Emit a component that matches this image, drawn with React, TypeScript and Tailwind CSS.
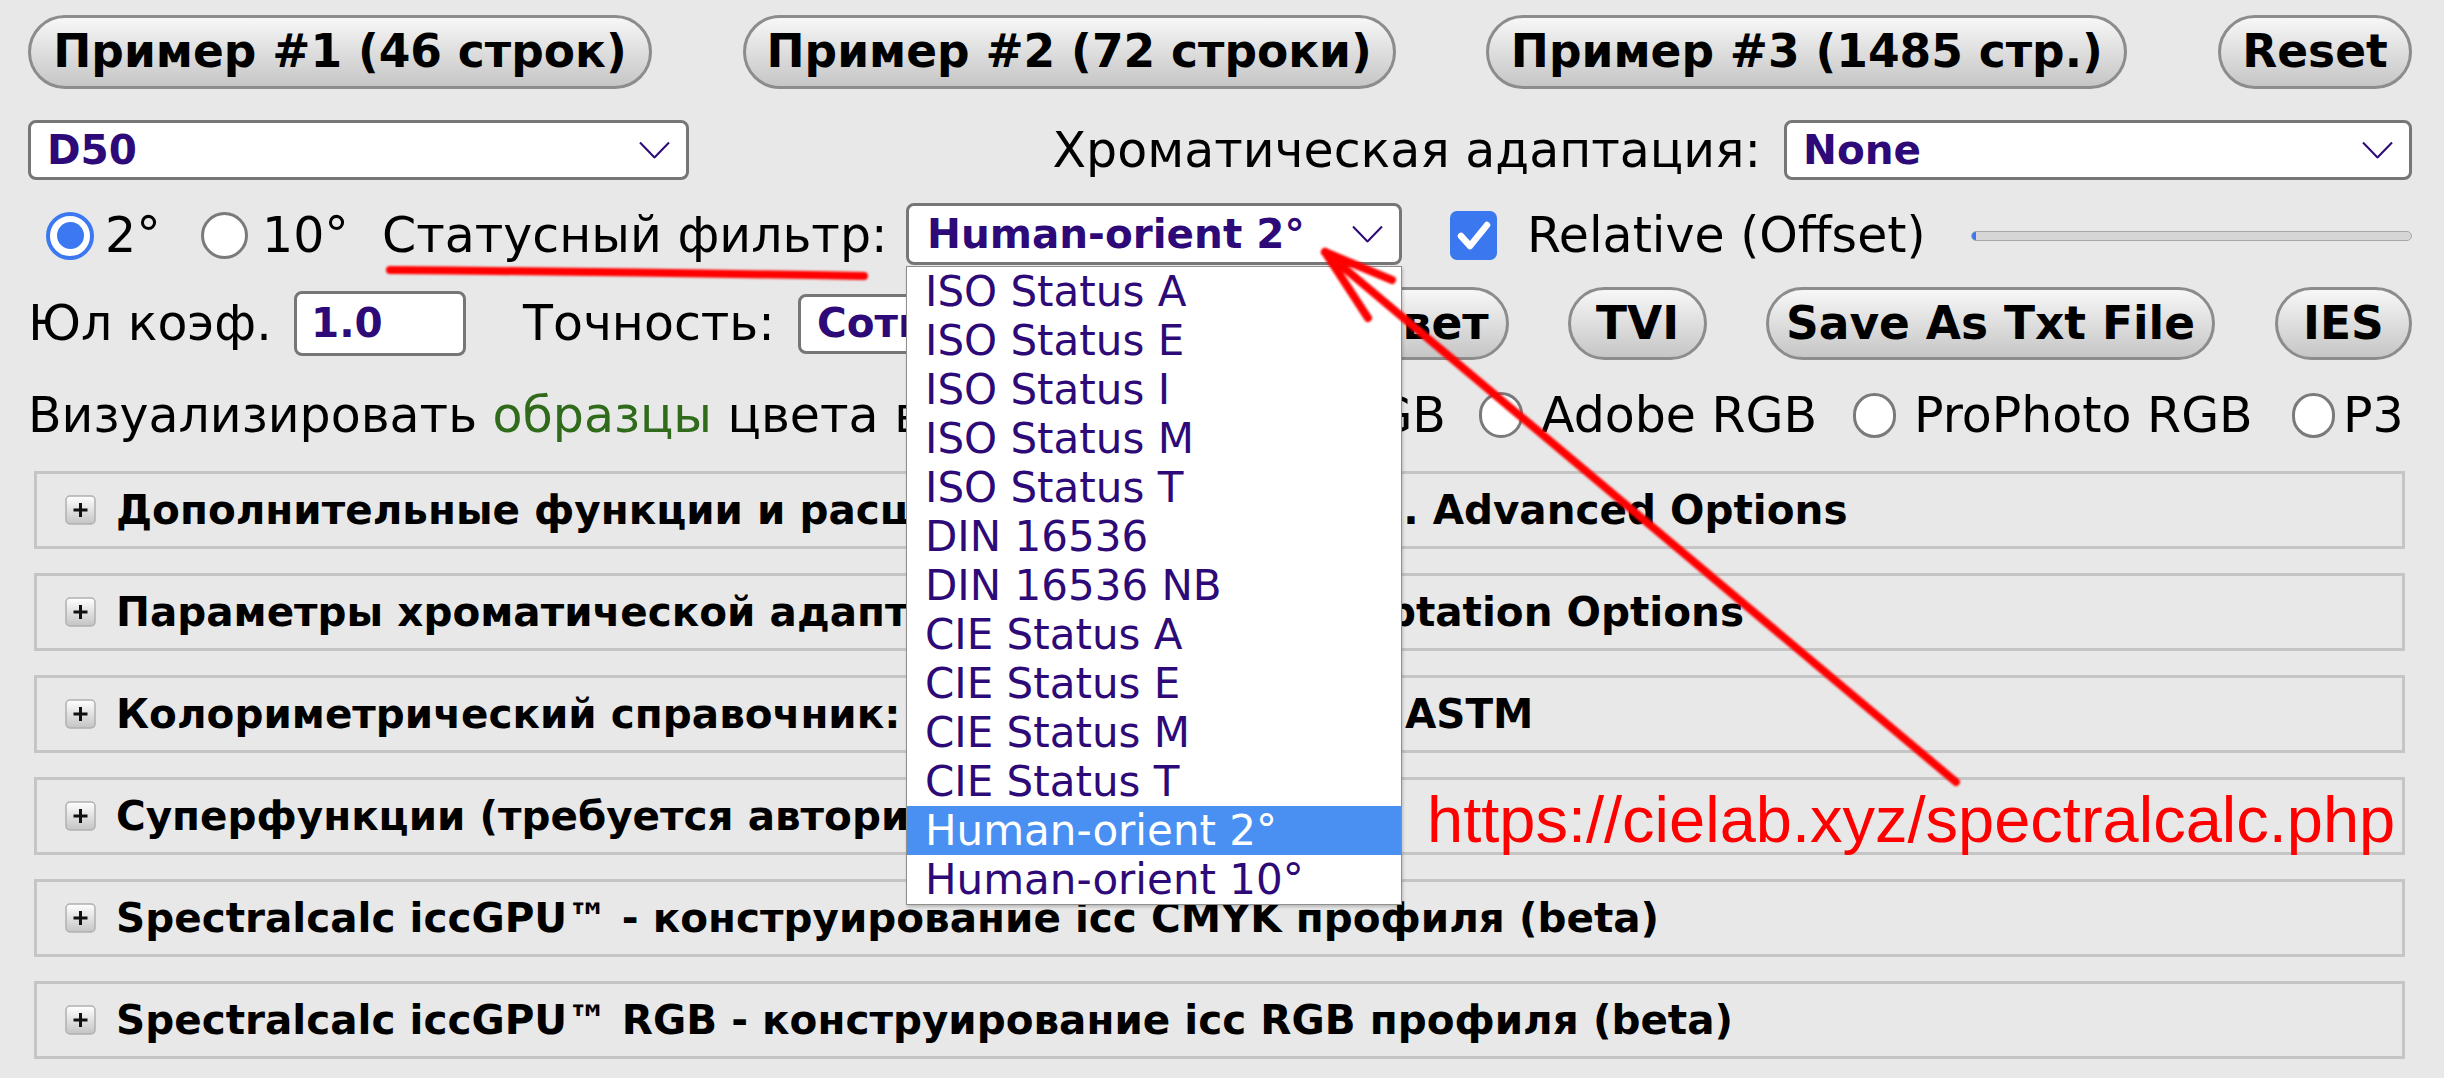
import React from 'react'

const btn =
  'flex h-full items-center justify-center rounded-full border-[3px] border-[#8c8c8c] bg-linear-to-b from-[#f7f7f7] to-[#c6c6c6] text-[45.5px] font-bold text-black whitespace-nowrap'
const selectBox =
  'relative flex items-center rounded-[8px] border-[3px] border-[#767676] bg-white pl-[16px] text-[40.5px] font-bold text-[#2d0a78] whitespace-nowrap overflow-hidden'

const filterOptions = [
  'ISO Status A',
  'ISO Status E',
  'ISO Status I',
  'ISO Status M',
  'ISO Status T',
  'DIN 16536',
  'DIN 16536 NB',
  'CIE Status A',
  'CIE Status E',
  'CIE Status M',
  'CIE Status T',
  'Human-orient 2°',
  'Human-orient 10°'
]

const panels = [
  'Дополнительные функции и расширенные параметры. Advanced Options',
  'Параметры хроматической адаптации. Chromatic Adaptation Options',
  'Колориметрический справочник: таблицы МКО, ISO и ASTM',
  'Суперфункции (требуется авторизация)',
  'Spectralcalc iccGPU™ - конструирование icc CMYK профиля (beta)',
  'Spectralcalc iccGPU™ RGB - конструирование icc RGB профиля (beta)'
]

function Chevron() {
  return (
    <svg width="31" height="17" viewBox="0 0 31 17" className="absolute right-[16px] top-1/2 -translate-y-1/2">
      <polyline points="1,1 15.5,16 30,1" fill="none" stroke="#2d0a78" strokeWidth="2" />
    </svg>
  )
}

function Radio({ checked = false, w = 47, h = 47 }: { checked?: boolean; w?: number; h?: number }) {
  return (
    <span
      className={
        checked
          ? 'flex shrink-0 items-center justify-center rounded-full border-[4px] border-[#3b78f2] bg-white'
          : 'flex shrink-0 items-center justify-center rounded-full border-[3px] border-[#7a7a7a] bg-white'
      }
      style={{ width: w, height: h }}
    >
      {checked && <span className="h-[27px] w-[27px] rounded-full bg-[#3b78f2]" />}
    </span>
  )
}

function PlusIcon() {
  return (
    <svg width="31" height="30" viewBox="0 0 31 30" className="shrink-0">
      <defs>
        <linearGradient id="pg" x1="0" y1="0" x2="0" y2="1">
          <stop offset="0" stopColor="#ffffff" />
          <stop offset="1" stopColor="#c4c4c4" />
        </linearGradient>
      </defs>
      <rect x="1" y="1" width="29" height="28" rx="4" fill="url(#pg)" stroke="#b0b0b0" strokeWidth="1.5" />
      <path d="M15.5 8 V22 M8.5 15 H22.5" stroke="#111" strokeWidth="3" />
    </svg>
  )
}

export default function App() {
  return (
    <div className="relative min-h-[1078px] w-full overflow-hidden bg-[#e8e8e8] pl-[28px] pr-[32px] pt-[15px] font-['DejaVu_Sans',sans-serif] text-[49px] leading-none text-black">
      {/* row 1 */}
      <div className="flex h-[74px] justify-between">
        <button className={btn + ' w-[624px]'}>Пример #1 (46 строк)</button>
        <button className={btn + ' w-[653px]'}>Пример #2 (72 строки)</button>
        <button className={btn + ' w-[641px]'}>Пример #3 (1485 стр.)</button>
        <button className={btn + ' w-[194px]'}>Reset</button>
      </div>

      {/* row 2 */}
      <div className="mt-[31px] flex h-[60px] items-center">
        <div className={selectBox + ' h-full w-[661px]'}>
          D50
          <Chevron />
        </div>
        <span className="ml-auto whitespace-nowrap">Хроматическая адаптация:</span>
        <div className={selectBox + ' ml-[23px] h-full w-[628px]'}>
          None
          <Chevron />
        </div>
      </div>

      {/* row 3 */}
      <div className="mt-[23px] flex h-[65px] items-center">
        <span className="ml-[18px]">
          <Radio checked w={48} h={48} />
        </span>
        <span className="ml-[11px] w-[96px]">2°</span>
        <Radio />
        <span className="ml-[14px] w-[120px]">10°</span>
        <span className="w-[524px] whitespace-nowrap">Статусный фильтр:</span>
        <div className={selectBox + ' h-[62px] w-[496px] self-start pl-[18px]'}>
          Human-orient 2°
          <Chevron />
        </div>
        <span className="ml-[48px] flex h-[49px] w-[47px] shrink-0 items-center justify-center rounded-[7px] bg-[#3b78ef]">
          <svg width="34" height="30" viewBox="0 0 34 30">
            <path d="M4 15 L13 25 L30 4" fill="none" stroke="#fff" strokeWidth="6.5" strokeLinecap="round" strokeLinejoin="round" />
          </svg>
        </span>
        <span className="ml-[30px] w-[444px] whitespace-nowrap">Relative (Offset)</span>
        <div className="relative h-[10px] flex-1 rounded-full border border-[#a8a8a8] bg-[#d6d6d6]">
          <span className="absolute left-0 top-0 h-full w-[4px] rounded-l-full bg-[#3b78ef]" />
        </div>
      </div>

      {/* row 4 */}
      <div className="mt-[19px] flex h-[73px] items-center">
        <span className="w-[266px] whitespace-nowrap">Юл коэф.</span>
        <div className="flex h-[65px] w-[172px] items-center rounded-[8px] border-[3px] border-[#767676] bg-white pl-[14px] text-[40.5px] font-bold text-[#2d0a78]">
          1.0
        </div>
        <span className="ml-[57px] w-[275px] whitespace-nowrap">Точность:</span>
        <div className={selectBox + ' h-[60px] w-[500px]'}>
          Сотые
          <Chevron />
        </div>
        <button className={btn + ' ml-[42px] w-[169px]'}>Цвет</button>
        <button className={btn + ' ml-[59px] w-[139px]'}>TVI</button>
        <button className={btn + ' ml-[59px] w-[449px]'}>Save As Txt File</button>
        <button className={btn + ' ml-[60px] w-[137px]'}>IES</button>
      </div>

      {/* row 5 */}
      <div className="mt-[31px] flex h-[48px] items-center whitespace-nowrap">
        <div className="flex w-[1418px] items-center justify-between">
          <span>
            Визуализировать <span className="text-[#2f6b1b]">образцы</span> цвета в:
          </span>
          <span className="flex items-center">
            <Radio checked w={44} h={46} />
            <span className="ml-[16px]">sRGB</span>
          </span>
        </div>
        <span className="ml-[33px]">
          <Radio w={44} h={46} />
        </span>
        <span className="ml-[18px] w-[312px]">Adobe RGB</span>
        <Radio w={43} h={45} />
        <span className="ml-[18px] w-[378px]">ProPhoto RGB</span>
        <Radio w={43} h={45} />
        <span className="ml-[8px]">P3</span>
      </div>

      {/* panels */}
      <div className="ml-[6px] mr-[7px] mt-[32px] flex flex-col gap-[24px]">
        {panels.map((title) => (
          <div
            key={title}
            className="flex h-[78px] items-center border-[3px] border-[#c5c5c5] bg-[#e8e8e8] pl-[28px] text-[40.5px] font-bold whitespace-nowrap"
          >
            <PlusIcon />
            <span className="ml-[20px]">{title}</span>
          </div>
        ))}
      </div>

      {/* open dropdown list */}
      <ul className="absolute left-[906px] top-[266px] w-[496px] border border-[#8f8f8f] bg-white text-[42px] text-[#2d0a78] shadow-[1px_2px_3px_rgba(0,0,0,0.2)]">
        {filterOptions.map((opt) => (
          <li
            key={opt}
            className={
              opt === 'Human-orient 2°'
                ? 'flex h-[49px] items-center bg-[#4a8ff2] pl-[18px] text-white'
                : 'flex h-[49px] items-center pl-[18px]'
            }
          >
            {opt}
          </li>
        ))}
      </ul>

      {/* annotation */}
      <span className="absolute left-[1427px] top-[787px] font-['Liberation_Sans',sans-serif] text-[65px] leading-none text-[#ff0000]">
        https://cielab.xyz/spectralcalc.php
      </span>
      <svg className="pointer-events-none absolute left-0 top-0" width="2444" height="1078">
        <defs>
          <filter id="soft">
            <feGaussianBlur stdDeviation="1.2" />
          </filter>
        </defs>
        <g fill="none" stroke="#ff0000" strokeWidth="8" strokeLinecap="round" filter="url(#soft)">
          <path d="M390 270 Q 640 272 864 276" />
          <path d="M1956 782 L1325 252" />
          <path d="M1325 252 L1392 280" />
          <path d="M1325 252 L1368 318" />
        </g>
      </svg>
    </div>
  )
}
